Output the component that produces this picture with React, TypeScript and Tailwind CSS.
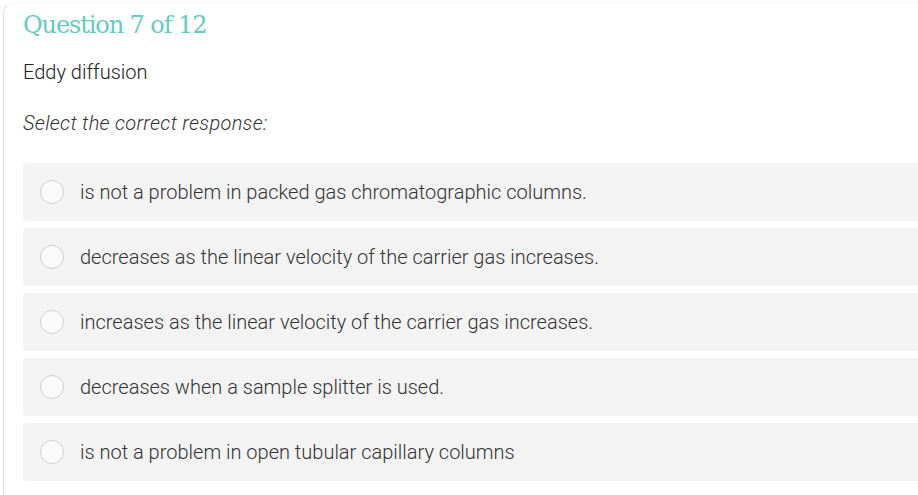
const options = [
  "is not a problem in packed gas chromatographic columns.",
  "decreases as the linear velocity of the carrier gas increases.",
  "increases as the linear velocity of the carrier gas increases.",
  "decreases when a sample splitter is used.",
  "is not a problem in open tubular capillary columns",
];

const App = () => {
  return (
    <div className="w-[918px] h-[495px] overflow-hidden bg-white pt-[2px] pl-[3px]">
      <div className="h-full border-l border-t border-[#e2e2e2] border-t-[#f8f8f8] rounded-tl-[10px] pl-[19px] pt-[6px] font-['Roboto',sans-serif]">
        <h1 className="font-['DejaVu_Serif',serif] text-[24px] leading-[32px] tracking-[-1.1px] text-[#63cbc1]">
          Question 7 of 12
        </h1>
        <p className="mt-[19px] text-[20px] leading-[24px] font-light text-[#222]">
          Eddy diffusion
        </p>
        <p className="mt-[27px] text-[20px] leading-[24px] font-light italic tracking-[0.3px] text-[#333]">
          Select the correct response:
        </p>
        <div className="mt-[28px] flex flex-col gap-[7px] -mr-[4px]">
          {options.map((opt) => (
            <label
              key={opt}
              className="flex items-center h-[58px] bg-[#f3f3f3] rounded-[3px] pl-[17px]"
            >
              <span className="w-[24px] h-[24px] rounded-full border border-[#cfcfcf] bg-[#fafafa] shrink-0" />
              <span className="ml-[16px] text-[20px] font-light text-[#333]">{opt}</span>
            </label>
          ))}
        </div>
      </div>
    </div>
  );
};

export default App;
